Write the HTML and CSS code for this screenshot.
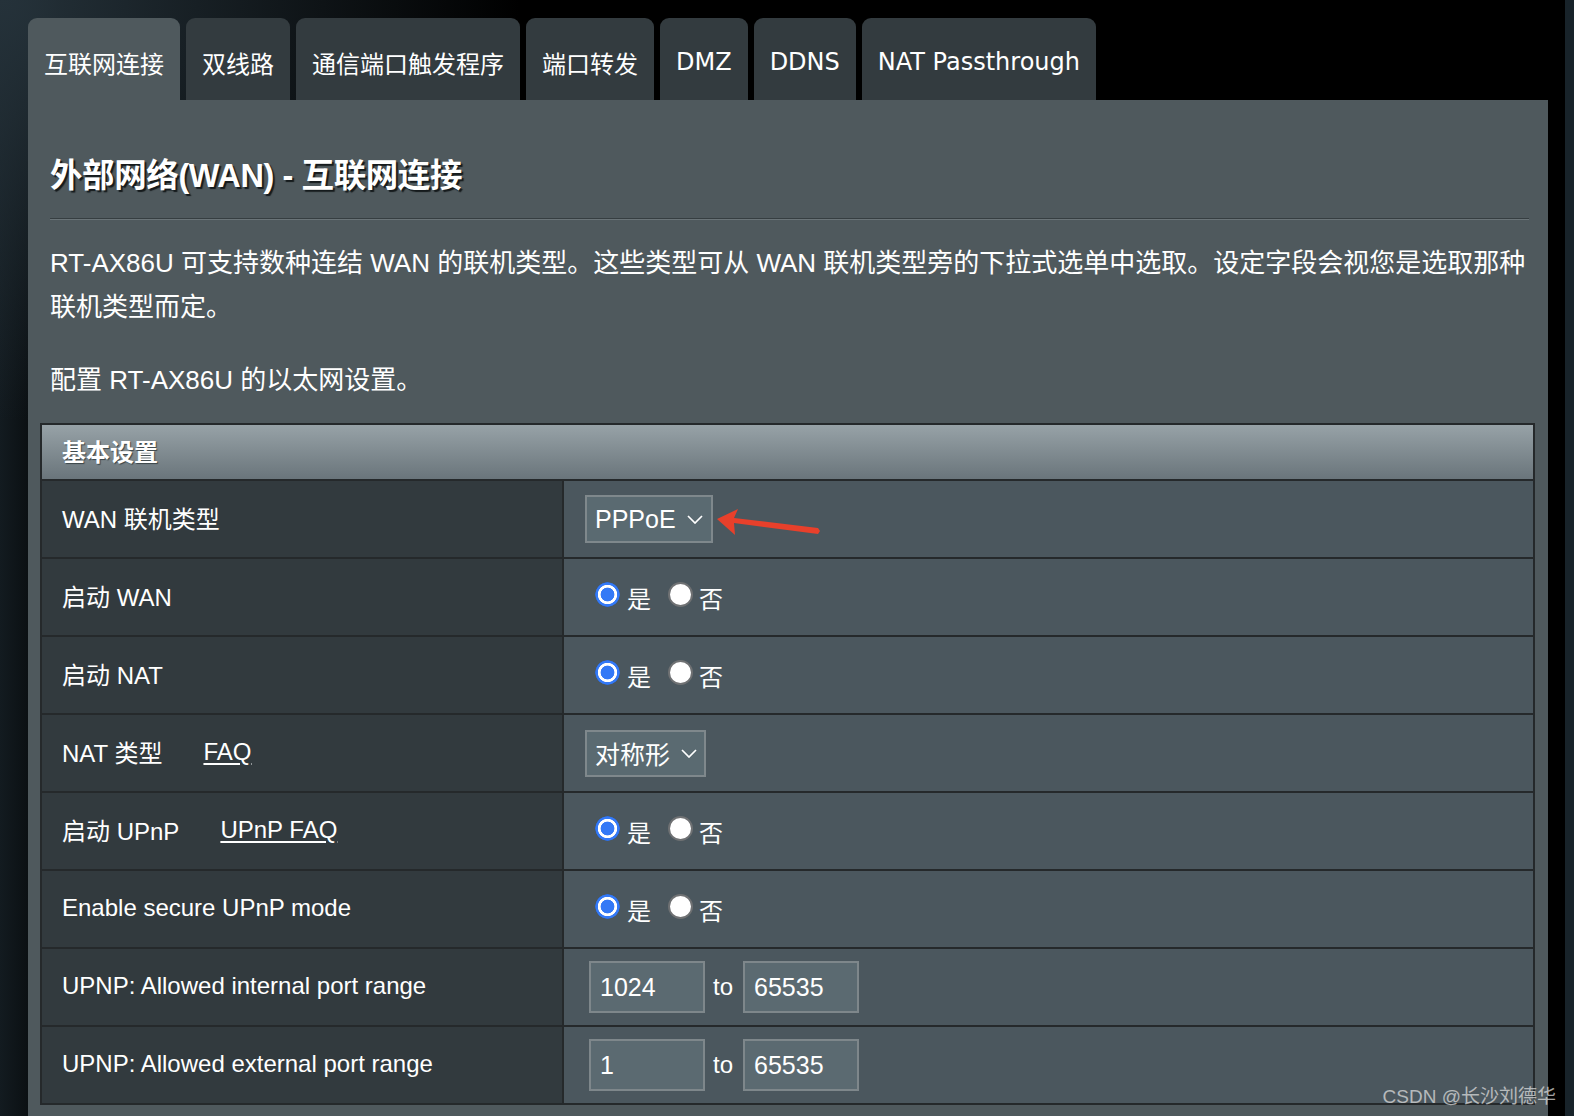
FILE: index.html
```html
<!DOCTYPE html>
<html lang="zh">
<head>
<meta charset="utf-8">
<title>外部网络(WAN) - 互联网连接</title>
<link rel="stylesheet" href="styles.css">
</head>
<body>
<div class="page">
  <div class="main">
    <nav class="tabs">
      <div class="tab active">互联网连接</div>
      <div class="tab">双线路</div>
      <div class="tab">通信端口触发程序</div>
      <div class="tab">端口转发</div>
      <div class="tab">DMZ</div>
      <div class="tab">DDNS</div>
      <div class="tab">NAT Passthrough</div>
    </nav>
    <section class="panel">
      <div class="intro">
        <h1 class="title">外部网络(WAN) - 互联网连接</h1>
        <div class="rule"></div>
        <p class="desc">RT-AX86U 可支持数种连结 WAN 的联机类型。这些类型可从 WAN 联机类型旁的下拉式选单中选取。设定字段会视您是选取那种联机类型而定。</p>
        <p class="desc config">配置 RT-AX86U 的以太网设置。</p>
      </div>
      <div class="settings">
        <div class="head">基本设置</div>
        <div class="row">
          <div class="label">WAN 联机类型</div>
          <div class="value">
            <div class="select">PPPoE<svg class="chev" viewBox="0 0 16 9" width="16" height="9"><path d="M1 1 L8 8 L15 1" fill="none" stroke="#fff" stroke-width="1.7"/></svg></div>
            <svg class="arrow" viewBox="0 0 110 32" width="110" height="32"><polygon points="3,12 24,2 20,11 104,21 106,24 104,27 20,16 21,28" fill="#e8402b"/></svg>
          </div>
        </div>
        <div class="row">
          <div class="label">启动 WAN</div>
          <div class="value radios">
            <span class="radio on"></span><span class="opt">是</span>
            <span class="radio"></span><span class="opt">否</span>
          </div>
        </div>
        <div class="row">
          <div class="label">启动 NAT</div>
          <div class="value radios">
            <span class="radio on"></span><span class="opt">是</span>
            <span class="radio"></span><span class="opt">否</span>
          </div>
        </div>
        <div class="row">
          <div class="label">NAT 类型<a class="faq" href="#">FAQ</a></div>
          <div class="value">
            <div class="select nat">对称形<svg class="chev" viewBox="0 0 16 9" width="16" height="9"><path d="M1 1 L8 8 L15 1" fill="none" stroke="#fff" stroke-width="1.7"/></svg></div>
          </div>
        </div>
        <div class="row">
          <div class="label">启动 UPnP<a class="faq" href="#">UPnP FAQ</a></div>
          <div class="value radios">
            <span class="radio on"></span><span class="opt">是</span>
            <span class="radio"></span><span class="opt">否</span>
          </div>
        </div>
        <div class="row">
          <div class="label">Enable secure UPnP mode</div>
          <div class="value radios">
            <span class="radio on"></span><span class="opt">是</span>
            <span class="radio"></span><span class="opt">否</span>
          </div>
        </div>
        <div class="row">
          <div class="label">UPNP: Allowed internal port range</div>
          <div class="value ports">
            <div class="field">1024</div><span class="to">to</span><div class="field">65535</div>
          </div>
        </div>
        <div class="row">
          <div class="label">UPNP: Allowed external port range</div>
          <div class="value ports">
            <div class="field">1</div><span class="to">to</span><div class="field">65535</div>
          </div>
        </div>
      </div>
    </section>
  </div>
  <div class="edge"></div>
  <div class="watermark">CSDN @长沙刘德华</div>
</div>
</body>
</html>
```

FILE: styles.css
```css
* { box-sizing: border-box; }
html, body { margin: 0; padding: 0; }
body {
  width: 1574px;
  height: 1116px;
  overflow: hidden;
  font-family: "Liberation Sans", "Noto Sans CJK SC", sans-serif;
  color: #fff;
  background:
    radial-gradient(ellipse 520px 420px at 0 0, #25323a 0%, #16202500 100%),
    linear-gradient(90deg, #131b20 0, #0b1013 28px, #000 60px);
  background-color: #000;
}
.page {
  position: relative;
  display: flex;
  height: 1116px;
}
.main {
  width: 1520px;
  margin-left: 28px;
  padding-top: 18px;
  display: flex;
  flex-direction: column;
}
.edge {
  margin-left: 17px;
  width: 9px;
  background: #18232a;
}
.tabs {
  display: flex;
  gap: 6px;
  height: 82px;
}
.tab {
  height: 82px;
  padding: 6px 16px 0;
  display: flex;
  align-items: center;
  background: #333b3f;
  border-radius: 9px 9px 0 0;
  font-family: "DejaVu Sans", "Noto Sans CJK SC", sans-serif;
  font-size: 24px;
  color: #fff;
}
.tab.active { background: #4f595d; }
.panel {
  flex: 1;
  background: #4f595d;
  padding: 56px 13px 0 12px;
}
.intro { padding: 0 6px 0 10px; }
.title {
  margin: 0;
  font-size: 32.5px;
  line-height: 40px;
  font-weight: bold;
  letter-spacing: -0.4px;
  text-shadow: 2px 2px 1px #151a1c;
}
.rule {
  margin-top: 22px;
  height: 2px;
  border-top: 1px solid #363e41;
  border-bottom: 1px solid #6a7478;
}
.desc {
  margin: 21px -10px 0 0;
  font-size: 26px;
  line-height: 44px;
}
.desc.config { margin-top: 29px; }
.settings {
  margin-top: 21px;
  border: 2px solid #25292b;
}
.head {
  height: 54px;
  display: flex;
  align-items: center;
  padding: 0 0 3px 20px;
  font-size: 24px;
  font-weight: bold;
  background: linear-gradient(#97a2a7, #6a757b);
  text-shadow: 1px 1px 1px #3a4448;
}
.row {
  display: grid;
  grid-template-columns: 522px 1fr;
  border-top: 2px solid #25292b;
  height: 78px;
}
.label {
  background: #323a3e;
  border-right: 2px solid #25292b;
  display: flex;
  align-items: center;
  padding: 0 0 3px 20px;
  font-size: 24px;
}
.faq {
  color: #fff;
  text-decoration: underline;
  text-underline-offset: 3px;
  margin-left: 41px;
}
.value {
  position: relative;
  background: #4b575e;
  display: flex;
  align-items: center;
  padding-left: 21px;
  font-size: 24px;
}
.select {
  height: 48px;
  width: 128px;
  display: flex;
  align-items: center;
  padding-left: 8px;
  border: 2px solid #7f888c;
  background: #5a6a71;
  font-size: 25px;
}
.select.nat { width: 121px; height: 47px; }
.chev { margin-left: 11px; flex-shrink: 0; }
.arrow {
  position: absolute;
  left: 150px;
  top: 26px;
}
.radios { padding-left: 31px; }
.radio {
  flex-shrink: 0;
  width: 25px;
  height: 25px;
  border-radius: 50%;
  background: #fff;
  border: 2px solid #6f7173;
  margin-top: -6px;
}
.radio.on {
  border: none;
  background: radial-gradient(circle closest-side, #3479f6 0 6.6px, #fff 7.2px 9.3px, #3479f6 10px 11.4px, #2c6fe6 12px, transparent 12.5px);
}
.opt { margin-left: 7px; margin-right: 17px; }
.radio + .opt + .radio + .opt { margin-left: 6px; }
.ports { padding-left: 25px; }
.field {
  width: 116px;
  height: 52px;
  display: flex;
  align-items: center;
  padding-left: 9px;
  border: 2px solid #7e878b;
  background: #5b6a71;
  font-size: 25px;
}
.to { margin: 0 10px 0 8px; font-size: 24px; }
.watermark {
  position: absolute;
  right: 18px;
  bottom: 8px;
  font-size: 19px;
  color: rgba(225, 225, 225, 0.72);
}
```
